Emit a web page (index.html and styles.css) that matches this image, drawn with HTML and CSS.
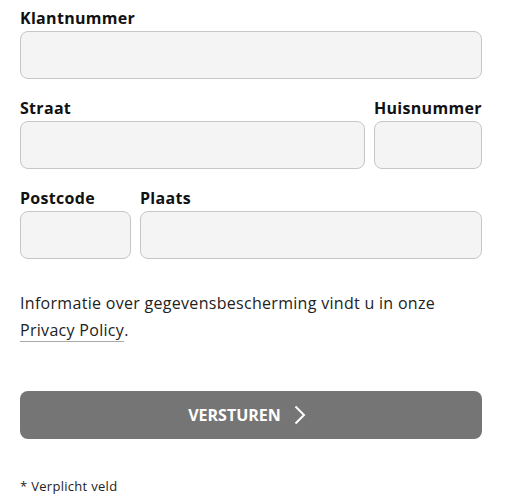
FILE: index.html
```html
<!DOCTYPE html>
<html lang="nl">
<head>
    <meta charset="UTF-8">
    <meta name="viewport" content="width=device-width, initial-scale=1.0">
    <title>Adres</title>
    <link rel="stylesheet" href="styles.css">
</head>
<body>
    <form class="form">
        <div class="field">
            <label for="klantnummer">Klantnummer</label>
            <input type="text" id="klantnummer">
        </div>

        <div class="row">
            <div class="field grow">
                <label for="straat">Straat</label>
                <input type="text" id="straat">
            </div>
            <div class="field small">
                <label for="huisnummer">Huisnummer</label>
                <input type="text" id="huisnummer">
            </div>
        </div>

        <div class="row">
            <div class="field postcode">
                <label for="postcode">Postcode</label>
                <input type="text" id="postcode">
            </div>
            <div class="field grow">
                <label for="plaats">Plaats</label>
                <input type="text" id="plaats">
            </div>
        </div>

        <p class="privacy">Informatie over gegevensbescherming vindt u in onze <a href="#">Privacy Policy</a>.</p>

        <button type="button" class="submit">
            VERSTUREN
            <svg width="12" height="20" viewBox="0 0 12 20"><path d="M1.5 1.5 L10 10 L1.5 18.5" fill="none" stroke="#fff" stroke-width="2"/></svg>
        </button>

        <p class="note">* Verplicht veld</p>
    </form>
</body>
</html>
```

FILE: styles.css
```css
body {
    font-family: "Open Sans", Arial, sans-serif;
    letter-spacing: 0.3px;
    color: #222;
    background: #fff;
    margin: 0;
    padding: 7px 28px 0 20px;
}

.form {
    display: flex;
    flex-direction: column;
}

.row {
    display: flex;
    gap: 9px;
}

.field {
    display: flex;
    flex-direction: column;
    gap: 2px;
    margin-bottom: 18px;
}

.grow {
    flex: 1;
}

.small {
    width: 108px;
}

.postcode {
    width: 111px;
}

label {
    font-weight: 700;
    font-size: 16px;
    line-height: 22px;
    color: #111;
}

input[type="text"] {
    box-sizing: border-box;
    height: 48px;
    width: 100%;
    background: #f4f4f4;
    border: 1px solid #c6c6c6;
    border-radius: 8px;
    padding: 0 12px;
    font-family: inherit;
    font-size: 16px;
}

.privacy {
    margin: 13px 0 0;
    font-size: 16px;
    line-height: 27px;
}

.privacy a {
    color: inherit;
    text-decoration: none;
    white-space: nowrap;
    border-bottom: 1px solid #aaa;
}

.submit {
    margin-top: 47px;
    height: 48px;
    background: #757575;
    color: #fff;
    border: none;
    border-radius: 8px;
    font-family: inherit;
    letter-spacing: 0;
    font-weight: 700;
    font-size: 16px;
    display: flex;
    align-items: center;
    justify-content: center;
    gap: 13px;
    padding: 0 8px 0 0;
    cursor: pointer;
}

.note {
    margin: 38px 0 0;
    font-size: 13px;
    line-height: 18px;
}
```
